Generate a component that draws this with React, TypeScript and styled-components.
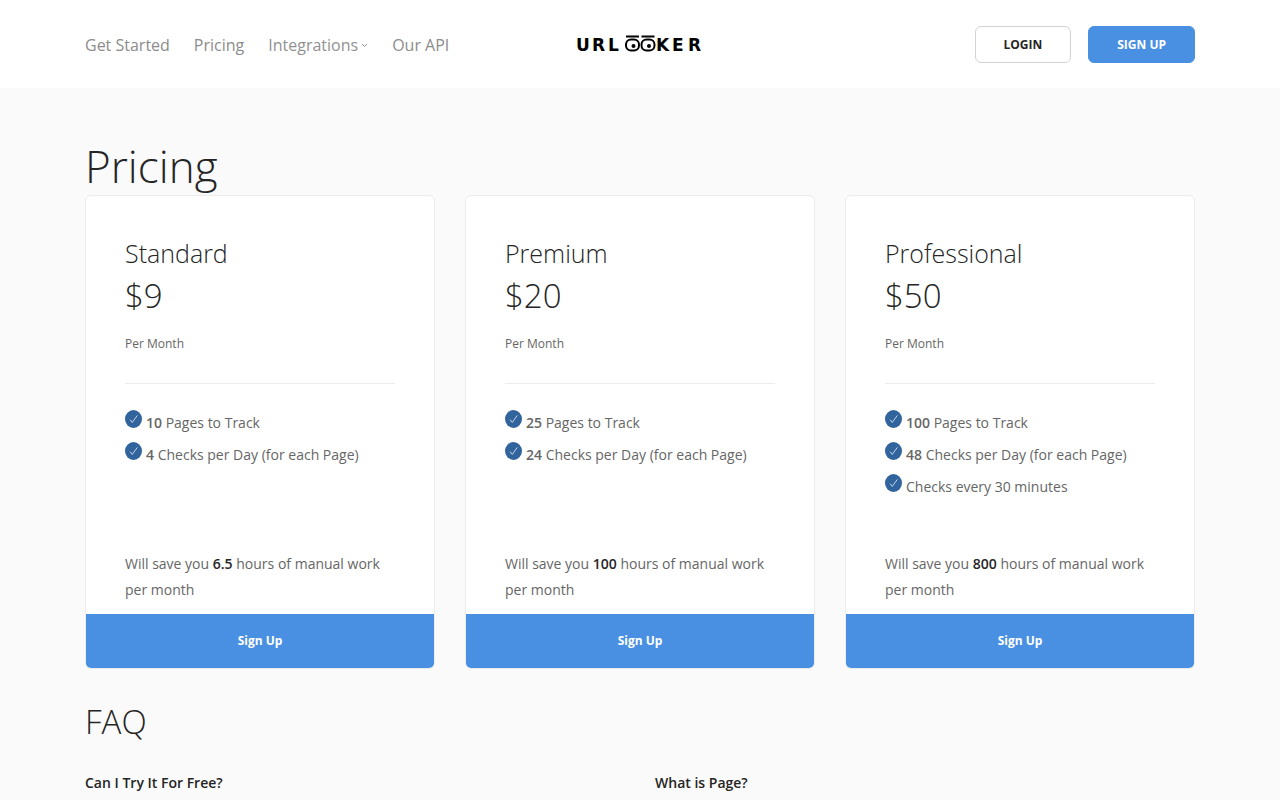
import React from 'react';
import styled, { createGlobalStyle } from 'styled-components';

const GlobalStyle = createGlobalStyle`
  *, *::before, *::after { box-sizing: border-box; }
  body {
    margin: 0;
    background: #fafafa;
    color: #666;
    font-family: "Open Sans", "Noto Sans", sans-serif;
    font-size: 14px;
    line-height: 26px;
  }
  h1, h2, h3, h4, p, ul { margin: 0; padding: 0; }
  a { text-decoration: none; }
`;

const Container = styled.div`
  width: 100%;
  max-width: 1140px;
  margin: 0 auto;
  padding: 0 15px;
`;

const Header = styled.header`
  background: #fff;
  padding: 26px 0 25px;
`;

const HeaderRow = styled(Container)`
  display: grid;
  grid-template-columns: 1fr auto 1fr;
  align-items: center;
`;

const Nav = styled.nav`
  display: flex;
  gap: 24px;
`;

const NavLink = styled.a`
  color: #8c8c8c;
  font-size: 16px;
  font-weight: 500;
`;

const NavMenu = styled.button`
  display: flex;
  align-items: center;
  gap: 3px;
  padding: 0;
  border: 0;
  background: none;
  color: #929292;
  font: inherit;
  font-size: 16px;
  cursor: pointer;
`;

const Actions = styled.div`
  display: flex;
  justify-content: flex-end;
  gap: 17px;
`;

const ActionButton = styled.button<{ $primary?: boolean }>`
  height: 37px;
  padding: 0 28px;
  border: 1px solid ${(p) => (p.$primary ? '#4a90e2' : '#d3d3d3')};
  border-radius: 6px;
  background: ${(p) => (p.$primary ? '#4a90e2' : '#fff')};
  color: ${(p) => (p.$primary ? '#fff' : '#252525')};
  font: inherit;
  font-size: 12px;
  font-weight: 700;
  text-transform: uppercase;
  cursor: pointer;
`;

const LogoLink = styled.a`
  display: flex;
`;

const Main = styled.main`
  padding: 49px 0 26px;
`;

const PageTitle = styled.h1`
  color: #252525;
  font-size: 44px;
  font-weight: 300;
  line-height: 58px;
`;

const Plans = styled.div`
  display: grid;
  grid-template-columns: repeat(3, 1fr);
  gap: 30px;
  margin-bottom: 31px;
`;

const Card = styled.article`
  display: flex;
  flex-direction: column;
  overflow: hidden;
  border: 1px solid #ececec;
  border-radius: 6px;
  background: #fff;
`;

const CardBody = styled.div`
  flex: 1;
  padding: 39px 39px 11px;
`;

const PlanName = styled.h3`
  color: #252525;
  font-size: 25px;
  font-weight: 300;
  line-height: 37px;
`;

const Price = styled.div`
  margin-bottom: 11px;
  color: #252525;
  font-size: 33px;
  font-weight: 300;
  line-height: 48px;
`;

const Period = styled.p`
  font-size: 12px;
`;

const Divider = styled.hr`
  height: 1px;
  margin: 26px 0;
  border: 0;
  background: #ececec;
`;

const Features = styled.ul`
  display: flex;
  flex-direction: column;
  gap: 6px;
  min-height: 128px;
  margin-bottom: 13px;
  list-style: none;
`;

const Feature = styled.li`
  display: flex;
  align-items: flex-start;
  gap: 4px;

  b { font-weight: 600; }
`;

const CheckIcon = styled.svg`
  flex: none;
`;

const Saving = styled.p`
  strong {
    color: #252525;
    font-weight: 600;
  }
`;

const CardButton = styled.button`
  height: 54px;
  border: 0;
  background: #4a90e2;
  color: #fff;
  font: inherit;
  font-size: 12px;
  font-weight: 700;
  cursor: pointer;
`;

const SectionTitle = styled.h2`
  margin-bottom: 26px;
  color: #252525;
  font-size: 33px;
  font-weight: 300;
  line-height: 44px;
`;

const Questions = styled.div`
  display: grid;
  grid-template-columns: 1fr 1fr;
  gap: 30px;
`;

const Question = styled.h4`
  color: #252525;
  font-size: 14px;
  font-weight: 600;
`;

type Plan = {
  name: string;
  price: string;
  features: { amount?: string; label: string }[];
  hours: string;
};

const plans: Plan[] = [
  {
    name: 'Standard',
    price: '$9',
    features: [
      { amount: '10', label: 'Pages to Track' },
      { amount: '4', label: 'Checks per Day (for each Page)' },
    ],
    hours: '6.5',
  },
  {
    name: 'Premium',
    price: '$20',
    features: [
      { amount: '25', label: 'Pages to Track' },
      { amount: '24', label: 'Checks per Day (for each Page)' },
    ],
    hours: '100',
  },
  {
    name: 'Professional',
    price: '$50',
    features: [
      { amount: '100', label: 'Pages to Track' },
      { amount: '48', label: 'Checks per Day (for each Page)' },
      { label: 'Checks every 30 minutes' },
    ],
    hours: '800',
  },
];

function Logo() {
  return (
    <svg width="130" height="22" viewBox="0 0 130 22" role="img" aria-label="Urlooker">
      <g fontFamily="'DejaVu Sans', sans-serif" fontWeight="700" fontSize="17" fill="#000">
        <text x="1 17 33" y="17">URL</text>
        <text x="81 97 113" y="17">KER</text>
      </g>
      <g fill="none" stroke="#000" strokeWidth="2">
        <rect x="51" y="5.5" width="13" height="11" rx="5" />
        <rect x="66.500" y="5.5" width="13" height="11" rx="5" />
        <path d="M51 2.500h13M66.500 2.500h13" />
      </g>
      <circle cx="58.500" cy="12" r="2" fill="#000" />
      <circle cx="74" cy="12" r="2" fill="#000" />
    </svg>
  );
}

function Check() {
  return (
    <CheckIcon width="17" height="18" viewBox="0 0 17 18" aria-hidden="true">
      <ellipse cx="8.5" cy="9" rx="8.5" ry="9" fill="#31639c" />
      <path d="M5 9.6l2.3 2.8L12.3 5.4" fill="none" stroke="#c3d6ec" strokeWidth="1" />
    </CheckIcon>
  );
}

export default function App() {
  return (
    <>
      <GlobalStyle />
      <Header>
        <HeaderRow>
          <Nav>
            <NavLink href="#start">Get Started</NavLink>
            <NavLink href="#pricing">Pricing</NavLink>
            <NavMenu type="button" aria-haspopup="true">
              Integrations
              <svg width="7" height="6" viewBox="0 0 7 6" aria-hidden="true">
                <path d="M1 2l2.5 2.5L6 2" fill="none" stroke="#929292" />
              </svg>
            </NavMenu>
            <NavLink href="#api">Our API</NavLink>
          </Nav>
          <LogoLink href="#home"><Logo /></LogoLink>
          <Actions>
            <ActionButton type="button">Login</ActionButton>
            <ActionButton type="button" $primary>Sign Up</ActionButton>
          </Actions>
        </HeaderRow>
      </Header>
      <Main>
        <Container>
          <PageTitle id="pricing">Pricing</PageTitle>
          <Plans>
            {plans.map((plan) => (
              <Card key={plan.name}>
                <CardBody>
                  <PlanName>{plan.name}</PlanName>
                  <Price>{plan.price}</Price>
                  <Period>Per Month</Period>
                  <Divider />
                  <Features>
                    {plan.features.map((feature) => (
                      <Feature key={feature.label}>
                        <Check />
                        <span>
                          {feature.amount && <><b>{feature.amount}</b> </>}
                          {feature.label}
                        </span>
                      </Feature>
                    ))}
                  </Features>
                  <Saving>
                    Will save you <strong>{plan.hours}</strong> hours of manual work{' '}
                    <span>per month</span>
                  </Saving>
                </CardBody>
                <CardButton type="button">Sign Up</CardButton>
              </Card>
            ))}
          </Plans>
          <SectionTitle>FAQ</SectionTitle>
          <Questions>
            <Question>Can I Try It For Free?</Question>
            <Question>What is Page?</Question>
          </Questions>
        </Container>
      </Main>
    </>
  );
}
